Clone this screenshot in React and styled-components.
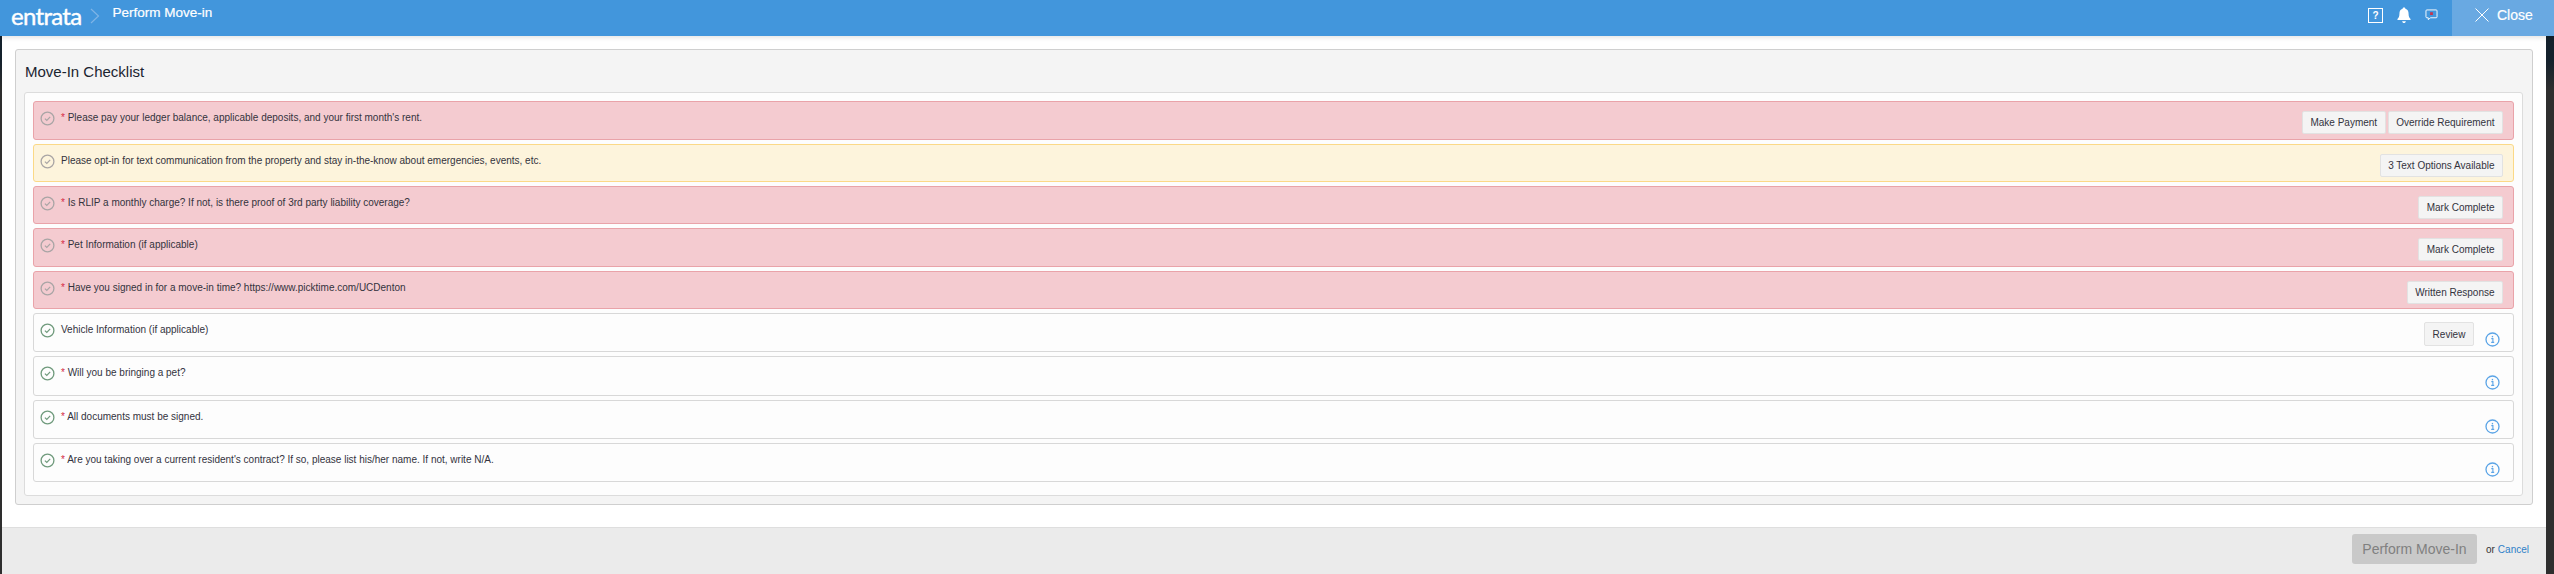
import React from 'react';
import styled, { createGlobalStyle } from 'styled-components';

const rows = [
  { tone: 'error', required: true, text: "Please pay your ledger balance, applicable deposits, and your first month's rent.", actions: ['Make Payment', 'Override Requirement'], height: 39 },
  { tone: 'warn', text: 'Please opt-in for text communication from the property and stay in-the-know about emergencies, events, etc.', actions: ['3 Text Options Available'], height: 38 },
  { tone: 'error', required: true, text: 'Is RLIP a monthly charge? If not, is there proof of 3rd party liability coverage?', actions: ['Mark Complete'], height: 38 },
  { tone: 'error', required: true, text: 'Pet Information (if applicable)', actions: ['Mark Complete'], height: 39 },
  { tone: 'error', required: true, text: 'Have you signed in for a move-in time? https://www.picktime.com/UCDenton', actions: ['Written Response'], height: 38 },
  { tone: 'done', text: 'Vehicle Information (if applicable)', review: true, info: true, height: 39 },
  { tone: 'done', required: true, text: 'Will you be bringing a pet?', info: true, height: 40 },
  { tone: 'done', required: true, text: 'All documents must be signed.', info: true, height: 39 },
  { tone: 'done', required: true, text: "Are you taking over a current resident's contract? If so, please list his/her name. If not, write N/A.", info: true, height: 39 },
];

function CheckIcon({ color }) {
  return (
    <svg width="15" height="15" viewBox="0 0 15 15" fill="none">
      <circle cx="7.5" cy="7.5" r="6.4" stroke={color} strokeWidth="1.3" />
      <path d="M4.9 7.6l1.9 1.9 3.4-3.6" stroke={color} strokeWidth="1.2" />
    </svg>
  );
}

function InfoIcon() {
  return (
    <svg width="15" height="15" viewBox="0 0 15 15" fill="none">
      <circle cx="7.5" cy="7.5" r="6.5" stroke="#5ba4e6" strokeWidth="1.3" />
      <path d="M6.3 6.6h1.6v3.6M6.2 10.4h3" stroke="#5ba4e6" strokeWidth="1.1" />
      <rect x="6.8" y="3.9" width="1.3" height="1.4" fill="#5ba4e6" />
    </svg>
  );
}

function App() {
  return (
    <Page>
      <GlobalStyle />
      <Header>
        <Brand>
          <Logo>entrata</Logo>
          <Chevron width="10" height="16" viewBox="0 0 10 16" fill="none">
            <path d="M1 1l7.5 7L1 15" stroke="#7fb4e6" strokeWidth="1.2" />
          </Chevron>
          <PageTitle>Perform Move-in</PageTitle>
        </Brand>
        <HeaderIcons>
          <HelpBox>?</HelpBox>
          <svg width="14" height="17" viewBox="0 0 15 18" fill="#fff">
            <path d="M7.5 0.5c1 0 1.4.6 1.5 1.4 2.5.6 3.4 2.7 3.4 5.3 0 3 .8 4.4 2.1 5.6v1H.5v-1c1.300-1.200 2.100-2.600 2.100-5.600 0-2.600.9-4.700 3.400-5.300C6.100 1.100 6.500.5 7.500.5z" />
            <path d="M5.500 15.200h4c-.2 1.200-1 1.900-2 1.900s-1.800-.7-2-1.900z" />
          </svg>
          <svg width="13" height="12" viewBox="0 0 14 13" fill="none">
            <path d="M2 1h10a1 1 0 0 1 1 1v6.500a1 1 0 0 1-1 1H6l-2.500 2V9.500H2a1 1 0 0 1-1-1V2a1 1 0 0 1 1-1z" stroke="#fff" strokeWidth="1" />
            <rect x="5.500" y="3.500" width="3" height="3" fill="#c8344a" />
          </svg>
        </HeaderIcons>
        <CloseButton>
          <svg width="14" height="14" viewBox="0 0 14 14" fill="none">
            <path d="M.5.500l13 13M13.500.500l-13 13" stroke="#fff" strokeWidth="1" />
          </svg>
          Close
        </CloseButton>
      </Header>
      <Modal>
        <Content>
          <Panel>
            <PanelTitle>Move-In Checklist</PanelTitle>
            <List>
              {rows.map((row) => (
                <Row key={row.text} $tone={row.tone} $height={row.height}>
                  <CheckSlot>
                    <CheckIcon color={row.tone === 'done' ? '#6f9a7c' : '#a9a5a5'} />
                  </CheckSlot>
                  <RowText>
                    {row.required && <Star>* </Star>}
                    {row.text}
                  </RowText>
                  {row.actions && (
                    <Actions>
                      {row.actions.map((a) => (
                        <ActionButton key={a}>{a}</ActionButton>
                      ))}
                    </Actions>
                  )}
                  {row.review && <ReviewButton>Review</ReviewButton>}
                  {row.info && <InfoSlot><InfoIcon /></InfoSlot>}
                </Row>
              ))}
            </List>
          </Panel>
        </Content>
        <Footer>
          <SubmitButton>Perform Move-In</SubmitButton>
          <span>or</span>
          <CancelLink>Cancel</CancelLink>
        </Footer>
      </Modal>
    </Page>
  );
}

const GlobalStyle = createGlobalStyle`
  html, body {
    margin: 0;
    padding: 0;
    overflow: hidden;
  }
  body {
    font-family: "Liberation Sans", Arial, sans-serif;
  }
`;

const Page = styled.div`
  width: 2554px;
  height: 574px;
  display: flex;
  flex-direction: column;
  background: linear-gradient(#14212c 0, #14212c 60px, #2e2e2e 90px);
`;

const Header = styled.header`
  height: 36px;
  flex: none;
  display: flex;
  justify-content: space-between;
  background: #4296dc;
  color: #fff;
  position: relative;
  box-shadow: 0 2px 4px rgba(0, 0, 0, 0.1);
`;

const Brand = styled.div`
  display: flex;
  align-items: center;
  height: 29px;
  padding-left: 11px;
`;

const Logo = styled.span`
  font-family: Lato, sans-serif;
  font-size: 24px;
  line-height: 29px;
  letter-spacing: -0.7px;
  -webkit-text-stroke: 0.4px #fff;
  position: relative;
  top: 1px;
`;

const Chevron = styled.svg`
  margin-left: 9px;
  position: relative;
  top: 1px;
`;

const PageTitle = styled.span`
  font-size: 13.500px;
  margin-left: 12px;
  -webkit-text-stroke: 0.2px #fff;
  position: relative;
  top: -2px;
`;

const HeaderIcons = styled.div`
  margin-left: auto;
  display: flex;
  align-items: center;
  gap: 14px;
  height: 30px;
  padding-right: 14px;
`;

const HelpBox = styled.span`
  width: 13px;
  height: 13px;
  border: 1px solid #fff;
  font-size: 10px;
  font-weight: 700;
  line-height: 13px;
  text-align: center;
`;

const CloseButton = styled.div`
  width: 102px;
  display: flex;
  align-items: center;
  gap: 8px;
  padding: 0 0 7px 23px;
  box-sizing: border-box;
  height: 36px;
  background: #69a9e2;
  font-size: 14px;
  -webkit-text-stroke: 0.2px #fff;
`;

const Modal = styled.main`
  flex: 1;
  min-height: 0;
  margin: 0 8px 0 2px;
  background: #fff;
  display: flex;
  flex-direction: column;
`;

const Content = styled.div`
  flex: 1;
  padding: 13px 13px 0;
`;

const Panel = styled.section`
  height: 456px;
  box-sizing: border-box;
  border: 1px solid #cfcfcf;
  border-radius: 3px;
  background: #f4f4f4;
  padding: 0 9px 8px 8px;
  display: flex;
  flex-direction: column;
`;

const PanelTitle = styled.h2`
  margin: 0;
  height: 42px;
  font-size: 15px;
  font-weight: 400;
  line-height: 44px;
  color: #1a2430;
  padding-left: 1px;
`;

const List = styled.div`
  flex: 1;
  background: #fdfdfd;
  border: 1px solid #dcdcdc;
  border-radius: 3px;
  padding: 8px 8px 0;
  display: flex;
  flex-direction: column;
  gap: 4px;
`;

const toneStyles = {
  error: 'background: #f4cbd0; border-color: #e9a3a9;',
  warn: 'background: #fdf4dc; border-color: #fbd987;',
  done: 'background: #fdfdfd; border-color: #d8d8d8;',
};

const Row = styled.div`
  height: ${(p) => p.$height}px;
  box-sizing: border-box;
  border: 1px solid;
  border-radius: 3px;
  ${(p) => toneStyles[p.$tone]}
  display: flex;
  align-items: flex-start;
  padding: 0 10px 0 6px;
`;

const CheckSlot = styled.span`
  width: 21px;
  flex: none;
  display: block;
  margin-top: 9px;
  height: 15px;
`;

const RowText = styled.div`
  flex: 1;
  font-size: 10px;
  line-height: 12px;
  color: #33333d;
  margin-top: 10px;
`;

const Star = styled.span`
  color: #d42a45;
`;

const Actions = styled.div`
  display: flex;
  gap: 2px;
  margin-top: 9px;
`;

const ActionButton = styled.button`
  height: 23px;
  padding: 0 7.500px;
  box-sizing: border-box;
  font: 10px "Liberation Sans", Arial, sans-serif;
  color: #33333d;
  background: #f4f4f4;
  border: 1px solid #e2e2e2;
  border-radius: 2px;
`;

const ReviewButton = styled(ActionButton)`
  margin: 8px 11px 0 0;
  height: 24px;
  width: 50px;
  padding: 0;
`;

const InfoSlot = styled.span`
  width: 15px;
  height: 15px;
  display: block;
  margin: 18px 3px 0 0;
`;

const Footer = styled.footer`
  height: 47px;
  flex: none;
  box-sizing: border-box;
  background: #ebebeb;
  border-top: 1px solid #dedede;
  display: flex;
  align-items: center;
  justify-content: flex-end;
  padding: 0 17px 4px 0;
  font-size: 10px;
  color: #333;
`;

const SubmitButton = styled.button`
  width: 125px;
  height: 30px;
  background: #c9c9c9;
  border: 0;
  border-radius: 3px;
  color: #808080;
  font: 14px "Liberation Sans", Arial, sans-serif;
  margin-right: 9px;
`;

const CancelLink = styled.a`
  color: #2f80c8;
  margin-left: 3px;
`;

export default App;
